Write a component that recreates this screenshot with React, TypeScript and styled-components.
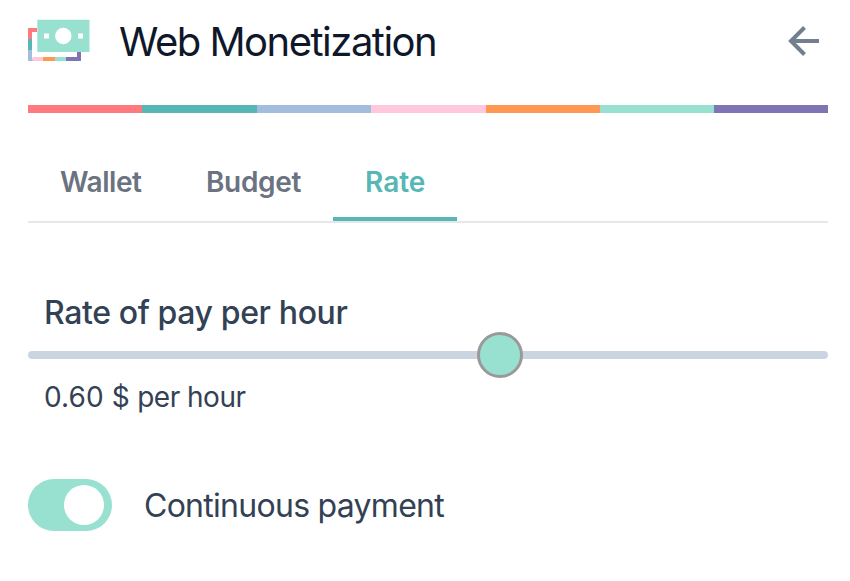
import React, { useState } from "react";
import styled, { createGlobalStyle } from "styled-components";

const GlobalStyle = createGlobalStyle`
  * { box-sizing: border-box; }
  body { margin: 0; background: #fff; font-family: Inter, "Liberation Sans", sans-serif; }
  button { font: inherit; border: 0; padding: 0; background: none; cursor: pointer; }
`;

const Popup = styled.main`
  width: 850px;
  height: 581px;
  padding: 16px 22px 0 28px;
  background: #fff;
  color: #334155;
  overflow: hidden;
`;

const Header = styled.header`
  display: flex;
  align-items: center;
  height: 52px;
`;

const Logo = styled.svg`
  display: block;
  width: 64px;
  height: 44px;
  margin-bottom: 4px;
  flex: none;
`;

const Title = styled.h1`
  flex: 1;
  margin: 0 0 0 27px;
  font-size: 40px;
  line-height: 52px;
  font-weight: 420;
  letter-spacing: -1.5px;
  color: #0f172a;
  white-space: nowrap;
`;

const BackButton = styled.button`
  width: 40px;
  height: 40px;
  margin-right: 2px;
  svg { display: block; }
`;

const Stripe = styled.div`
  display: grid;
  grid-template-columns: 114px 115px 114px 115px 114px 114px 114px;
  width: 800px;
  height: 8px;
  margin-top: 37px;
`;

const Swatch = styled.span<{ $color: string }>`
  background: ${(p) => p.$color};
`;

const Tabs = styled.nav`
  display: flex;
  width: 800px;
  height: 78px;
  margin-top: 32px;
  border-bottom: 2px solid #e5e7eb;
`;

const Tab = styled.button<{ $active: boolean; $width: number; $tracking: number }>`
  width: ${(p) => p.$width}px;
  height: 76px;
  padding: 2px 0 0 32px !important;
  text-align: left;
  font-size: 28px;
  line-height: 70px;
  font-weight: 600;
  letter-spacing: ${(p) => p.$tracking}px;
  white-space: nowrap;
  color: ${(p) => (p.$active ? "#56b7b5" : "#6b7280")};
  border-bottom: 4px solid ${(p) => (p.$active ? "#56b7b5" : "transparent")};
`;

const RateSection = styled.section`
  width: 800px;
  padding-top: 70px;
`;

const RateLabel = styled.h2`
  margin: 0 0 0 16px;
  font-size: 32px;
  line-height: 39px;
  font-weight: 550;
  letter-spacing: -0.38px;
`;

const Slider = styled.input`
  display: block;
  appearance: none;
  width: 800px;
  height: 46px;
  margin: 0;
  background: transparent;
  outline: none;
  &::-webkit-slider-runnable-track {
    height: 8px;
    border-radius: 4px;
    background: #cbd5e1;
  }
  &::-webkit-slider-thumb {
    appearance: none;
    width: 46px;
    height: 46px;
    margin-top: -19px;
    border: 3px solid #999;
    border-radius: 50%;
    background: #98e1d0;
  }
`;

const RateValue = styled.p`
  margin: 0 0 0 16px;
  font-size: 28px;
  line-height: 38px;
  font-weight: 420;
  letter-spacing: -0.5px;
`;

const Amount = styled.span`
  letter-spacing: 0.1px;
`;

const PaymentRow = styled.label`
  display: flex;
  align-items: center;
  gap: 32px;
  height: 52px;
  margin-top: 63px;
`;

const Toggle = styled.button<{ $on: boolean }>`
  display: flex;
  align-items: center;
  justify-content: ${(p) => (p.$on ? "flex-end" : "flex-start")};
  width: 84px;
  height: 52px;
  padding: 0 8px !important;
  border-radius: 26px;
  background: ${(p) => (p.$on ? "#98e1d0" : "#cbd5e1")} !important;
`;

const Knob = styled.span`
  width: 40px;
  height: 40px;
  border-radius: 50%;
  background: #fff;
`;

const PaymentText = styled.span`
  padding-top: 2px;
  font-size: 32px;
  line-height: 40px;
  font-weight: 420;
  letter-spacing: -0.72px;
`;

const stripeColors = ["#ff7a7f", "#56b7b5", "#a3bedc", "#ffc8dc", "#ff9852", "#98e1d0", "#8075b3"];

const tabs = [
  { name: "Wallet", width: 146, tracking: -0.45 },
  { name: "Budget", width: 159, tracking: -0.35 },
  { name: "Rate", width: 124, tracking: 0 },
];

function LogoMark() {
  return (
    <Logo viewBox="0 0 64 44">
      <path fill="#ff7a7f" d="M0 10h9v4H4v7H0z" />
      <path fill="#56b7b5" d="M0 21h4v11H0z" />
      <path fill="#a3bedc" d="M0 32h4v7l1 4H0z" />
      <path fill="#ffc8dc" d="M4.500 39H15v4H5z" />
      <path fill="#ff9852" d="M15 39h12v4H15z" />
      <path fill="#98e1d0" d="M27 39h11v4H27z" />
      <path fill="#8075b3" d="M38 39h11v-5h4v9H38z" />
      <path fill="#98e1d0" d="M9.300 1.700h52.200V34H9.300z" />
      <circle cx="35.300" cy="18" r="8.200" fill="#fff" />
      <path fill="#fff" d="M16 15.500h5v5h-5zM50 15.500h5v5h-5z" />
    </Logo>
  );
}

export default function App() {
  const [active, setActive] = useState("Rate");
  const [rate, setRate] = useState(59.6);
  const [continuous, setContinuous] = useState(true);
  return (
    <Popup>
      <GlobalStyle />
      <Header>
        <LogoMark />
        <Title>Web Monetization</Title>
        <BackButton aria-label="Back">
          <svg width="40" height="40" viewBox="0 0 40 40" fill="none" stroke="#727f8e" strokeWidth="4">
            <path d="M33 19H5M18.500 5.500 5 19 18.500 32.500" />
          </svg>
        </BackButton>
      </Header>
      <Stripe>
        {stripeColors.map((c) => (
          <Swatch key={c} $color={c} />
        ))}
      </Stripe>
      <Tabs>
        {tabs.map((t) => (
          <Tab
            key={t.name}
            $active={t.name === active}
            $width={t.width}
            $tracking={t.tracking}
            onClick={() => setActive(t.name)}
          >
            {t.name}
          </Tab>
        ))}
      </Tabs>
      <RateSection>
        <RateLabel>Rate of pay per hour</RateLabel>
        <Slider
          type="range"
          aria-label="Rate of pay per hour"
          min={0}
          max={100}
          step={0.1}
          value={rate}
          onChange={(e) => setRate(Number(e.target.value))}
        />
        <RateValue>
          <Amount>{(rate / 100).toFixed(2)} $</Amount> per hour
        </RateValue>
      </RateSection>
      <PaymentRow>
        <Toggle $on={continuous} onClick={() => setContinuous(!continuous)} aria-label="Continuous payment">
          <Knob />
        </Toggle>
        <PaymentText>Continuous payment</PaymentText>
      </PaymentRow>
    </Popup>
  );
}
